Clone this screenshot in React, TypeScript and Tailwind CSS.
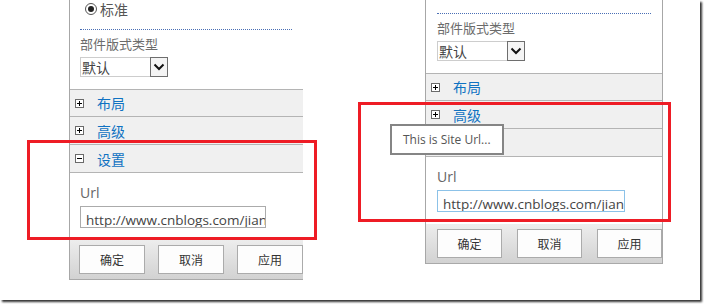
import React from "react";

const cjk = { fontFamily: '"Noto Sans CJK SC", "Noto Sans", sans-serif' };
const lat = { fontFamily: '"Open Sans", "Noto Sans CJK SC", sans-serif' };

function Expander({ open }: { open?: boolean }) {
  return (
    <div className="w-[9px] h-[9px] border border-[#6a6a6a] bg-white flex items-center justify-center relative">
      <div className="absolute w-[5px] h-[1px] bg-black left-[1px] top-[3px]" />
      {!open && <div className="absolute w-[1px] h-[5px] bg-black left-[3px] top-[1px]" />}
    </div>
  );
}

function Header({ label, open, h, hidden }: { label: string; open?: boolean; h: string; hidden?: boolean }) {
  return (
    <div className={`${h} bg-[#f0f0f0] border-b border-[#b4b4b4] flex items-center pl-[5px]`}>
      {!hidden && (
        <>
          <Expander open={open} />
          <span className="ml-[13px] text-[14px] leading-[18px] text-[#0f72c2]" style={cjk}>
            {label}
          </span>
        </>
      )}
    </div>
  );
}

function Panel({ right }: { right?: boolean }) {
  return (
    <div
      className={
        right
          ? "w-[238px] border-l border-r border-[#a7a7a7] flex flex-col"
          : "w-[234px] border-l border-[#a7a7a7] flex flex-col"
      }
    >
      <div className={right ? "pl-[11px]" : "pl-[10px]"}>
        {right ? (
          <div className="h-[13px]" />
        ) : (
          <>
            <div className="h-[18px] flex items-center pl-[5px]">
              <div className="w-[12px] h-[12px] rounded-full border border-[#555] flex items-center justify-center">
                <div className="w-[6px] h-[6px] rounded-full bg-[#222]" />
              </div>
              <span className="ml-[3px] text-[14px] leading-[18px] text-[#555]" style={cjk}>
                标准
              </span>
            </div>
            <div className="h-[11px]" />
          </>
        )}
        <div className={`border-t border-dotted border-[#4a6fb5] ${right ? "w-[214px]" : "w-[212px]"}`} />
        <div className="mt-[5px] h-[18px] text-[13px] leading-[18px] text-[#6b6b6b]" style={cjk}>
          部件版式类型
        </div>
        <div className="mt-[4px] h-[20px] w-[88px] border border-[#cdcdcd] flex bg-white">
          <div className="flex-1 pl-[1px] text-[14px] leading-[18px] text-[#444]" style={cjk}>
            默认
          </div>
          <div className="w-[18px] h-[20px] -mt-[1px] -mr-[1px] border border-[#6e6e6e] bg-[#f4f4f4] flex items-center justify-center">
            <svg width="12" height="8" viewBox="0 0 12 8">
              <path d="M1.5 1.5 L6 6 L10.5 1.5" stroke="#111" strokeWidth="2" fill="none" />
            </svg>
          </div>
        </div>
      </div>
      <div className="mt-[12px] border-t border-[#b4b4b4]">
        <Header label="布局" h="h-[27px]" />
        <Header label="高级" h="h-[28px]" />
        <Header label="设置" open h="h-[28px]" hidden={right} />
      </div>
      <div className={right ? "pl-[11px]" : "pl-[10px]"}>
        <div className="mt-[11px] h-[18px] text-[14px] leading-[18px] text-[#666]" style={lat}>
          Url
        </div>
        <div
          className={
            right
              ? "mt-[4px] h-[22px] w-[188px] border border-[#8cc2e8] bg-white overflow-hidden whitespace-nowrap pl-[5px]"
              : "mt-[4px] h-[22px] w-[186px] border border-[#ababab] bg-white overflow-hidden whitespace-nowrap pl-[5px]"
          }
        >
          <span className="text-[13.5px] leading-[20px] text-[#444]" style={lat}>
            http://www.cnblogs.com/jian
          </span>
        </div>
      </div>
      <div
        className={`mt-[12px] h-[40px] border-b border-[#a9a9a9] bg-gradient-to-b from-[#ededed] to-[#d2d2d2] flex items-start pt-[5px] ${
          right ? "pl-[11px] gap-[15px]" : "pl-[9px] gap-[13px]"
        }`}
      >
        {["确定", "取消", "应用"].map((t) => (
          <div
            key={t}
            className={`${right ? "w-[65px]" : "w-[66px]"} h-[29px] border border-[#ababab] bg-[#fdfdfd] flex items-center justify-center text-[12px] text-[#333]`}
            style={cjk}
          >
            {t}
          </div>
        ))}
      </div>
    </div>
  );
}

export default function App() {
  return (
    <div className="w-[704px] h-[304px] bg-white overflow-hidden relative">
      <div className="w-[700px] h-[300px] bg-white shadow-[2px_2px_2px_rgba(0,0,0,0.8)] overflow-hidden relative">
        <div className="flex items-start">
          <div className="ml-[69px]">
            <Panel />
          </div>
          <div className="ml-[122px]">
            <Panel right />
          </div>
        </div>
        <div className="absolute left-[27px] top-[140px] w-[290px] h-[100px] border-[3px] border-[#ee1c25]" />
        <div className="absolute left-[358px] top-[102px] w-[313px] h-[120px] border-[3px] border-[#ee1c25]" />
        <div className="absolute left-[390px] top-[124px] w-[114px] h-[31px] border-2 border-[#858585] bg-white flex items-center pl-[11px]">
          <span className="text-[12px] text-[#555]" style={lat}>
            This is Site Url...
          </span>
        </div>
      </div>
    </div>
  );
}
